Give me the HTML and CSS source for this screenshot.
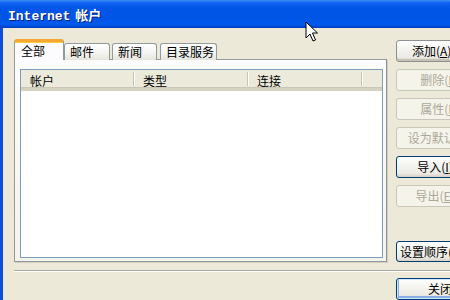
FILE: index.html
```html
<!DOCTYPE html>
<html>
<head>
<meta charset="utf-8">
<link rel="stylesheet" href="styles.css">
</head>
<body>
<div class="window">
  <div class="titlebar"><span class="title-latin">Internet</span> <span class="title-cjk">帐户</span></div>
  <div class="frame">
    <div class="client">
      <div class="main">
        <div class="left">
          <div class="tabs">
            <div class="tab tab-all active">全部</div>
            <div class="tab tab-mail">邮件</div>
            <div class="tab tab-news">新闻</div>
            <div class="tab tab-dir">目录服务</div>
          </div>
          <div class="panel">
            <div class="listview">
              <div class="header">
                <div class="col">帐户</div>
                <div class="col">类型</div>
                <div class="col">连接</div>
              </div>
            </div>
          </div>
        </div>
        <div class="buttons">
          <div class="btn btn-gray">添加(<u>A</u>)&nbsp;&nbsp;&nbsp;&nbsp;▸</div>
          <div class="btn disabled">删除(<u>R</u>)</div>
          <div class="btn disabled">属性(<u>P</u>)</div>
          <div class="btn disabled">设为默认(<u>D</u>)</div>
          <div class="btn">导入(<u>I</u>)...</div>
          <div class="btn disabled">导出(<u>E</u>)...</div>
          <div class="btn btn-order">设置顺序(<u>S</u>)...</div>
        </div>
      </div>
      <div class="sep"></div>
      <div class="bottom">
        <div class="btn btn-default">关闭</div>
      </div>
    </div>
  </div>
  <svg class="cursor" width="14" height="22" viewBox="0 0 14 22">
    <path d="M1 1 L1 17 L5 13 L8 20 L10.5 19 L7.5 12 L12.5 12 Z" fill="#fff" stroke="#000" stroke-width="1" stroke-linejoin="miter"/>
  </svg>
</div>
</body>
</html>
```
FILE: styles.css
```css
html, body {
  margin: 0;
  padding: 0;
  background: #ECE9D8;
}
.window {
  position: relative;
  width: 450px;
  height: 300px;
  overflow: hidden;
  display: flex;
  flex-direction: column;
  font-family: "Noto Sans CJK SC", sans-serif;
  font-size: 12px;
  color: #000;
}
.titlebar {
  height: 28px;
  flex: none;
  box-sizing: border-box;
  padding: 6px 0 0 8px;
  color: #fff;
  background: linear-gradient(to bottom, #3D8DF7 0px, #0F63EE 3px, #0256E6 8px, #0055E6 18px, #005AEE 24px, #0048D2 27px, #0038A8 28px);
  text-shadow: 1px 1px 0 #0A1A7A;
  white-space: nowrap;
  line-height: 18px;
}
.title-latin {
  font-family: "Liberation Mono", monospace;
  font-weight: bold;
  font-size: 13px;
}
.title-cjk {
  font-family: "Noto Sans CJK SC", sans-serif;
  font-weight: bold;
  font-size: 13px;
  margin-left: 2px;
}
.frame {
  flex: 1;
  display: flex;
  min-width: 0;
  border-left: 3px solid #0D4FDB;
  box-shadow: inset 1px 0 0 #2E6EEA;
}
.client {
  flex: 1;
  min-width: 0;
  display: flex;
  flex-direction: column;
  padding: 12px 0 0 11px;
  background: #ECE9D8;
}
.main {
  display: flex;
  height: 222px;
}
.left {
  width: 373px;
  flex: none;
  display: flex;
  flex-direction: column;
}
.tabs {
  display: flex;
  align-items: flex-end;
  height: 20px;
  position: relative;
  z-index: 2;
  margin-bottom: -1px;
}
.tab {
  box-sizing: border-box;
  height: 17px;
  border: 1px solid #919B9C;
  border-bottom: none;
  border-radius: 3px 3px 0 0;
  background: linear-gradient(to bottom, #FFFFFF, #F3F3EF 60%, #E6E5DC);
  padding-left: 5px;
  line-height: 15px;
  white-space: nowrap;
  overflow: hidden;
}
.tab-all { width: 50px; padding-left: 6px; }
.tab-mail { width: 46px; }
.tab-news { width: 45px; margin-left: 2px; }
.tab-dir { width: 57px; margin-left: 3px; padding-left: 5px; }
.tab.active {
  height: 21px;
  background: #FCFCFE;
  border-top: 3px solid #F5A734;
  box-shadow: inset 0 1px 0 #FFC843;
  line-height: 17px;
}
.panel {
  box-sizing: border-box;
  height: 203px;
  border: 1px solid #919B9C;
  border-right-color: #8C9596;
  background: linear-gradient(to bottom, #FCFCFE, #F4F3EE);
  padding: 9px 3px 3px 5px;
  box-shadow: 1px 1px 0 #D0CEBF;
}
.listview {
  box-sizing: border-box;
  height: 100%;
  border: 1px solid #7F9DB9;
  background: #fff;
}
.header {
  display: flex;
  height: 21px;
  box-sizing: border-box;
  background: #EBEADB;
  border-bottom: 3px solid #D6D2C2;
  box-shadow: inset 0 -1px 0 #CBC7B8;
}
.col {
  box-sizing: border-box;
  width: 114px;
  padding-left: 9px;
  border-right: 1px solid #C7C5B2;
  box-shadow: 1px 0 0 #fff;
  margin: 2px 0 2px 0;
  line-height: 15px;
  padding-top: 1px;
}
.col:first-child { width: 113px; }
.buttons {
  margin-left: 9px;
  flex: none;
  display: flex;
  flex-direction: column;
  gap: 7px;
}
.btn {
  box-sizing: border-box;
  width: 88px;
  height: 22px;
  flex: none;
  border: 1px solid #003C74;
  border-radius: 3px;
  background: linear-gradient(to bottom, #FFFFFF, #F4F4F0 40%, #ECEBE6 80%, #D6D0C5);
  text-align: center;
  line-height: 20px;
  white-space: nowrap;
}
.btn u { text-decoration: underline; }
.btn-gray {
  border-color: #8E8F8F;
  box-shadow: inset 0 -2px 0 #C6C3B4;
}
.btn.disabled {
  border-color: #C9C7BA;
  background: #F5F4EA;
  color: #ACA899;
}
.btn-order {
  margin-top: auto;
  height: 21px;
  text-align: left;
  padding-left: 3px;
}
.sep {
  margin-top: 8px;
  height: 0;
  border-top: 1px solid #ACA899;
  border-bottom: 1px solid #FFFFFF;
}
.bottom {
  display: flex;
  padding-top: 6px;
  padding-left: 382px;
}
.btn-default {
  box-shadow: inset 0 0 0 1px #CEE7FF, inset 0 -1px 0 2px #89ADE4;
}
.cursor {
  position: absolute;
  left: 305px;
  top: 21px;
}
```
